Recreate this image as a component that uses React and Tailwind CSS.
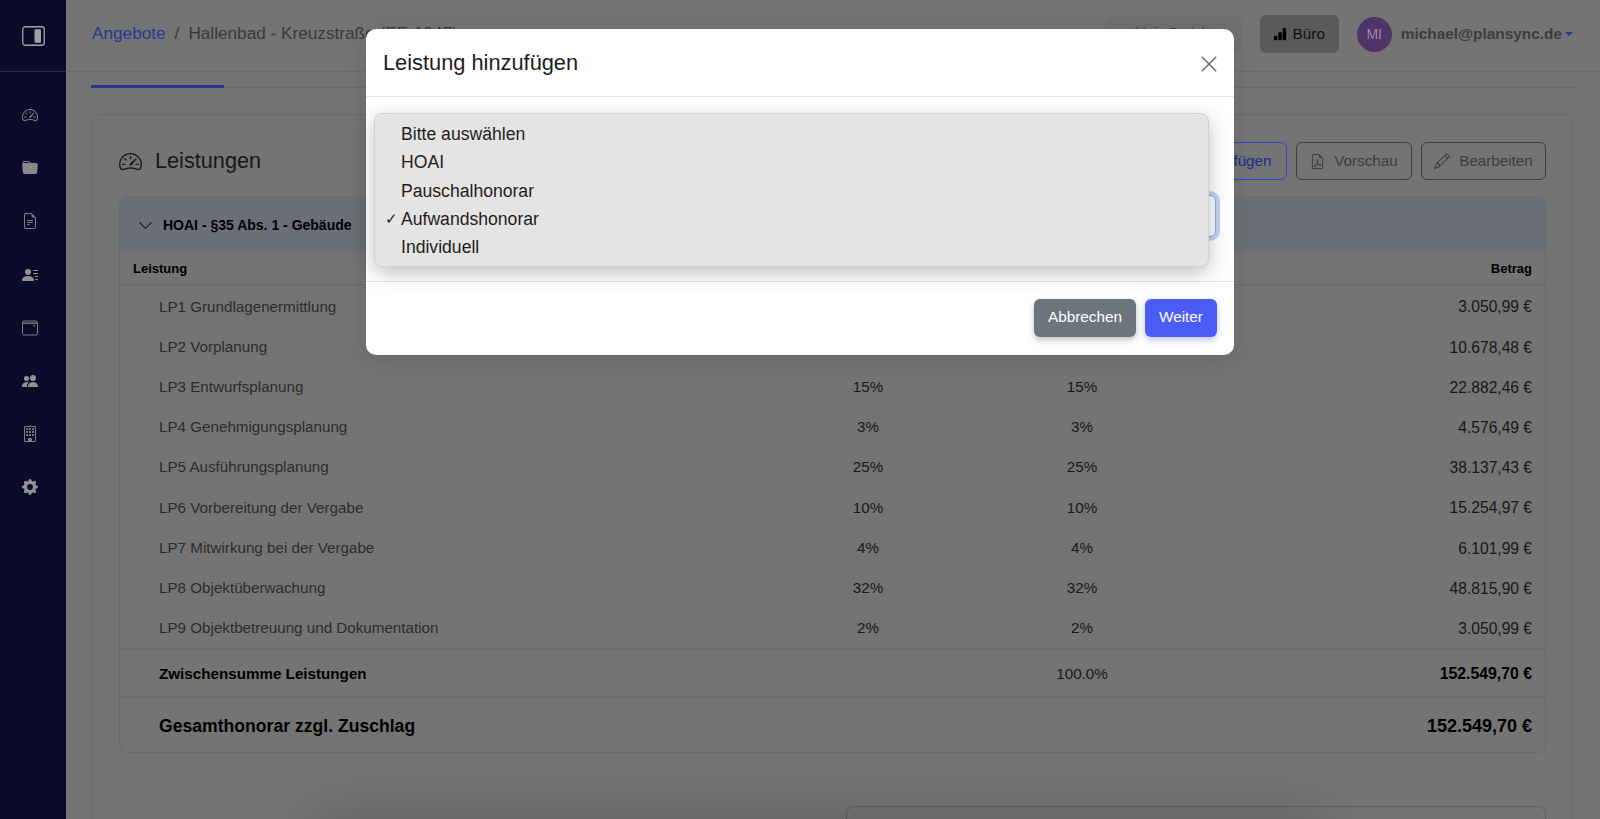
import React from "react";
import {
  BsSpeedometer2,
  BsFolderFill,
  BsFileEarmarkText,
  BsPersonLinesFill,
  BsPeopleFill,
  BsBuilding,
  BsGearFill,
  BsBarChartFill,
  BsFileEarmarkPdf,
  BsPencil,
  BsChevronDown,
  BsPlusLg,
} from "react-icons/bs";

// first two rows sit behind the modal, their percent columns never show
const rows = [
  ["LP1 Grundlagenermittlung", "", "", "3.050,99 €"],
  ["LP2 Vorplanung", "", "", "10.678,48 €"],
  ["LP3 Entwurfsplanung", "15%", "15%", "22.882,46 €"],
  ["LP4 Genehmigungsplanung", "3%", "3%", "4.576,49 €"],
  ["LP5 Ausführungsplanung", "25%", "25%", "38.137,43 €"],
  ["LP6 Vorbereitung der Vergabe", "10%", "10%", "15.254,97 €"],
  ["LP7 Mitwirkung bei der Vergabe", "4%", "4%", "6.101,99 €"],
  ["LP8 Objektüberwachung", "32%", "32%", "48.815,90 €"],
  ["LP9 Objektbetreuung und Dokumentation", "2%", "2%", "3.050,99 €"],
];

const options = ["Bitte auswählen", "HOAI", "Pauschalhonorar", "Aufwandshonorar", "Individuell"];

function CalendarIcon() {
  return (
    <svg width="16" height="16" viewBox="0 0 16 16" fill="none" stroke="currentColor" strokeWidth="1">
      <rect x="0.5" y="1" width="15" height="14" rx="1.5" />
      <path d="M0.5 3.2h15" strokeWidth="1.4" />
      <rect x="11.5" y="5" width="1.6" height="1.6" fill="currentColor" stroke="none" />
    </svg>
  );
}

function Sidebar() {
  return (
    <aside className="w-[66px] shrink-0 bg-[#0d0b2b] text-[#7d7d88]">
      <div className="h-[72px] border-b border-[#2b2a42] flex items-center justify-center">
        <svg width="23" height="20" viewBox="0 0 23 20" fill="none">
          <rect x="0.75" y="0.75" width="21.5" height="18.5" rx="2.5" stroke="#a0a0a7" strokeWidth="1.3" />
          <rect x="12.5" y="3.2" width="6.5" height="13.6" rx="1" fill="#a0a0a7" />
        </svg>
      </div>
      <nav className="flex flex-col items-center gap-[37.2px] pt-[35px] pr-[7px]">
        <BsSpeedometer2 size={16} />
        <BsFolderFill size={16} className="text-[#88888b]" />
        <BsFileEarmarkText size={16} />
        <BsPersonLinesFill size={16} className="text-[#929296]" />
        <CalendarIcon />
        <BsPeopleFill size={16} className="text-[#929296]" />
        <BsBuilding size={16} />
        <BsGearFill size={16} className="text-[#929296]" />
      </nav>
    </aside>
  );
}

function Topbar() {
  return (
    <header className="h-[72px] shrink-0 border-b border-[#6c6c6c] flex items-center pl-[26px] pr-[27px]">
      <div className="text-[17.2px] text-[#3a3a3a] flex-1 whitespace-nowrap pb-[3px]">
        <span className="text-[#2a3890]">Angebote</span>
        <span className="mx-[9px]">/</span>
        Hallenbad - Kreuzstraße (EE-1047)
      </div>
      <div className="h-[36px] w-[136px] rounded-[6px] bg-[#707070] flex items-center justify-center text-[14px] text-[#3a3a3a] mr-[18px] mb-[4px]">
        Mein Projekt
      </div>
      <div className="h-[38px] w-[79px] rounded-[6px] bg-[#5a5a5a] flex items-center justify-center gap-[5px] text-[15.4px] text-[#111] mr-[18px] mb-[3px]">
        <BsBarChartFill size={14} className="text-black" />
        Büro
      </div>
      <div className="w-[35px] h-[35px] rounded-full bg-[#4f3468] text-[#9a88ac] text-[14px] flex items-center justify-center mr-[9px] mb-[3px]">
        MI
      </div>
      <div className="text-[15.4px] font-bold text-[#3c3c3c] mb-[3px]">michael@plansync.de</div>
      <div className="ml-[3px] mb-[3px] w-0 h-0 border-x-[4px] border-x-transparent border-t-[4px] border-t-[#2a3890]" />
    </header>
  );
}

function OutlineButton({ icon, children, className }) {
  return (
    <button className={"h-[38px] rounded-[6px] border flex items-center justify-center gap-[9px] text-[15.2px] " + className}>
      {icon}
      {children}
    </button>
  );
}

function OffersTable() {
  return (
    <div className="mt-[17px] rounded-[8px] border border-[#6a6a6a] overflow-hidden">
      <div className="h-[53px] bg-[#6a6f76] flex items-center gap-[10px] pl-[18px] pt-[2px] text-[14px] font-bold text-black">
        <BsChevronDown size={15} className="text-[#111]" />
        HOAI - §35 Abs. 1 - Gebäude
      </div>
      <div className="h-[35px] border-b-2 border-[#6e6e6e] flex items-center justify-between px-[13px] pt-[3px] text-[13px] font-bold text-black">
        <div>Leistung</div>
        <div>Betrag</div>
      </div>
      {rows.map((row) => (
        <div key={row[0]} className="h-[40.2px] grid grid-cols-[641px_214px_214px_1fr] items-center pt-[2px] text-[15.2px] text-[#181818] pr-[13px]">
          <div className="pl-[39px] text-[#2c2c2c]">{row[0]}</div>
          <div className="text-center">{row[1]}</div>
          <div className="text-center">{row[2]}</div>
          <div className="text-right text-[15.6px]">{row[3]}</div>
        </div>
      ))}
      <div className="h-[50px] border-y-2 border-[#6e6e6e] grid grid-cols-[641px_214px_214px_1fr] items-center pt-[3px] text-[15.2px] text-black pr-[13px]">
        <div className="pl-[39px] font-bold">Zwischensumme Leistungen</div>
        <div />
        <div className="text-center text-[#181818]">100.0%</div>
        <div className="text-right font-bold text-[15.8px]">152.549,70 €</div>
      </div>
      <div className="h-[54px] flex items-center justify-between pl-[39px] pr-[13px] pt-[3px] text-[17.6px] font-bold text-black">
        <div>Gesamthonorar zzgl. Zuschlag</div>
        <div className="text-[18px]">152.549,70 €</div>
      </div>
    </div>
  );
}

function Modal() {
  return (
    <div className="absolute left-[366px] top-[29px] w-[868px] rounded-[10px] bg-white shadow-[0_4px_20px_rgba(0,0,0,0.12)]">
      <div className="h-[68px] border-b border-[#e4e4e4] flex items-center justify-between pl-[17px] pr-[17px] pt-[2px]">
        <h5 className="text-[21.8px] text-[#1d1d1d]">Leistung hinzufügen</h5>
        <svg width="16" height="16" viewBox="0 0 16 16" stroke="#6f6f6f" strokeWidth="1.6">
          <path d="M0.8 0.8l14.4 14.4M15.2 0.8L0.8 15.2" />
        </svg>
      </div>
      <div className="h-[184px] px-[18px] pt-[98px]">
        <div className="h-[42px] rounded-[6px] border border-[#86a8ee] ring-4 ring-[#c3d5f7]" />
      </div>
      <div className="h-[74px] border-t border-[#e4e4e4] flex items-center justify-end gap-[9px] pr-[17px] pb-[2px]">
        <button className="h-[38px] w-[102px] rounded-[6px] bg-[#6c757d] text-white text-[15.3px] shadow-[0_3px_6px_rgba(0,0,0,0.25)]">
          Abbrechen
        </button>
        <button className="h-[38px] w-[72px] rounded-[6px] bg-[#4a5cf6] text-white text-[15.3px] shadow-[0_3px_7px_rgba(74,92,246,0.35)]">
          Weiter
        </button>
      </div>
      <ul className="absolute left-[8px] top-[84px] w-[835px] h-[154px] rounded-[8px] border border-[#d3d2d0] bg-[#e5e4e2] shadow-[0_6px_20px_rgba(0,0,0,0.25)] pt-[6px] text-[17.6px] text-[#1e1e1e]">
        {options.map((o) => (
          <li key={o} className="relative h-[28.3px] pl-[26px] flex items-center">
            {o === "Aufwandshonorar" && <span className="absolute left-[10px] text-[15px]">✓</span>}
            {o}
          </li>
        ))}
      </ul>
    </div>
  );
}

export default function App() {
  return (
    <div className="relative flex h-screen w-full overflow-hidden bg-[#747474] font-['Liberation_Sans',sans-serif]">
      <Sidebar />
      <main className="flex-1 min-w-0 flex flex-col">
        <Topbar />
        <div className="mt-[13px] ml-[25px] mr-[25px] h-[3px] shrink-0 border-b border-[#6a6a6a]">
          <div className="w-[133px] h-[3px] bg-[#2a3690]" />
        </div>
        <section className="mt-[26px] ml-[26px] mr-[27px] shrink-0 rounded-t-[8px] border border-[#6a6a6a] px-[26px] pt-[27px] pb-[400px]">
          <div className="flex items-center h-[38px]">
            <BsSpeedometer2 size={23} className="text-[#1c1c1c]" />
            <h2 className="ml-[13px] text-[21.7px] text-[#181818] flex-1 pt-[1px]">Leistungen</h2>
            <div className="flex gap-[9px]">
              <OutlineButton icon={<BsPlusLg size={13} />} className="w-[130px] border-[#3347c8] text-[#1c2a90]">Hinzufügen</OutlineButton>
              <OutlineButton icon={<BsFileEarmarkPdf size={15} />} className="w-[116px] border-[#3f3f3f] text-[#3c3c3c]">Vorschau</OutlineButton>
              <OutlineButton icon={<BsPencil size={16} />} className="w-[125px] border-[#3f3f3f] text-[#3c3c3c]">Bearbeiten</OutlineButton>
            </div>
          </div>
          <OffersTable />
          <div className="mt-[53px] ml-auto w-[700px] h-[60px] rounded-[8px] border border-[#5f5f5f]" />
        </section>
      </main>
      <div className="absolute left-[340px] top-[840px] w-[960px] h-[40px] shadow-[0_0_50px_20px_rgba(0,0,0,0.2)]" />
      <Modal />
    </div>
  );
}
